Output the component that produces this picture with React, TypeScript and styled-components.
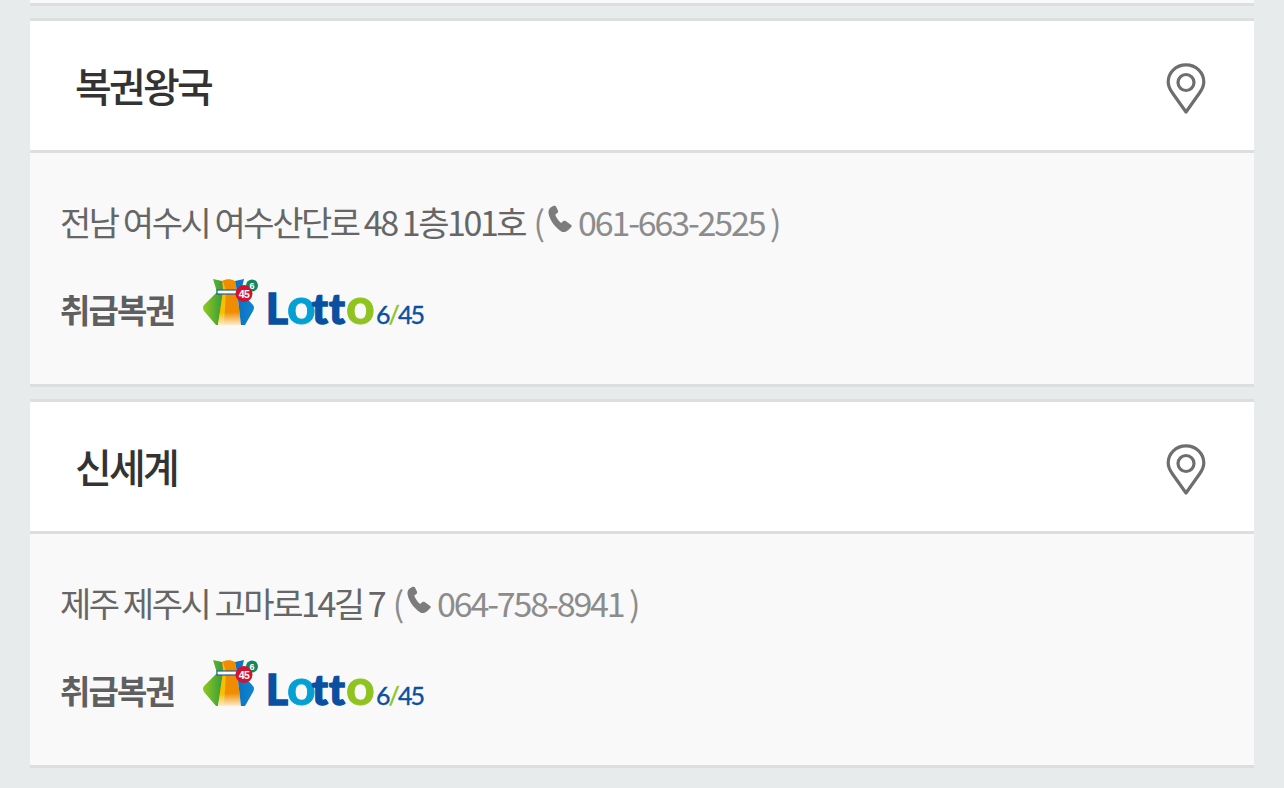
import React from "react";
import styled, { createGlobalStyle } from "styled-components";

const Global = createGlobalStyle`
  html, body { margin: 0; padding: 0; background: #e8ebec; height: 100%; overflow: hidden; }
  body { font-family: "Noto Sans CJK KR", "Noto Sans", sans-serif; }
`;

const Page = styled.div`
  padding: 0 30px;
  height: 788px;
  overflow: hidden;
`;

const Stub = styled.div`
  height: 3px;
  background: #f9f9f9;
  border-bottom: 3px solid #dcdedf;
  margin-bottom: 12px;
`;

const Card = styled.section`
  border-top: 3px solid #dcdedf;
  border-bottom: 3px solid #dcdedf;
  margin-bottom: 12px;
  background: #f9f9f9;
`;

const Head = styled.header`
  height: 129px;
  background: #fff;
  border-bottom: 3px solid #dcdedf;
  display: flex;
  align-items: center;
  justify-content: space-between;
  padding: 0 48px 0 45px;
`;

const Title = styled.h2`
  margin: 0 0 2px;
  font-size: 40px;
  font-weight: 500;
  letter-spacing: -2.8px;
  color: #333;
  line-height: 1;
`;

const PinSvg = styled.svg`
  display: block;
  margin-top: 6px;
`;

const Body = styled.div`
  height: 231px;
  box-sizing: border-box;
  padding: 46px 30px 0;
`;

const Address = styled.p`
  margin: 0;
  height: 44px;
  display: flex;
  align-items: center;
  font-size: 34px;
  font-weight: 400;
  letter-spacing: -2.45px;
  color: #666;
  white-space: pre;
`;

const Phone = styled.span`
  color: #8c8c8c;
  display: inline-flex;
  align-items: center;
  white-space: pre;
  letter-spacing: -2.15px;
  margin-left: 3px;
`;

const PhoneSvg = styled.svg`
  display: block;
  margin: 0 6px 4px 5px;
`;

const Kinds = styled.div`
  display: flex;
  align-items: center;
  margin-top: 28px;
  height: 66px;
`;

const KindsLabel = styled.strong`
  font-size: 33px;
  font-weight: 700;
  letter-spacing: -1.9px;
  color: #5f5f5f;
  width: 143px;
  margin-top: 10px;
`;

const PinIcon = () => (
  <PinSvg width="40" height="51" viewBox="0 0 40 51" fill="none" stroke="#6e6e6e" strokeWidth="3.2">
    <path d="M20 49 L6.5 30 C3.3 25.5 2.2 22.5 2.2 19 C2.2 9.5 10 1.8 20 1.8 C30 1.8 37.8 9.5 37.8 19 C37.8 22.5 36.7 25.5 33.5 30 Z" strokeLinejoin="round" />
    <circle cx="20" cy="19.5" r="8" />
  </PinSvg>
);

const PhoneIcon = () => (
  <PhoneSvg width="24" height="28" viewBox="0 0 24.5 28">
    <path
      fill="#7c7c7c"
      d="M6 0.5 C4 1 1 3 0.5 6 C0 12 6 22 14 27 C16 28 19 27 21 25 L24 22 C24.5 21 24 20 23 19.5 L18 16 C17 15.5 16 15.5 15 16.5 L13.5 18 C11 16.5 8 12 7.5 9.5 L9.5 8 C10.5 7 10.5 6 10 5 L8 1 C7.7 0.5 7 0.3 6 0.5 Z"
    />
  </PhoneSvg>
);

const LogoWord = styled.text`
  font-family: Lato, "Open Sans", sans-serif;
  font-weight: 900;
`;

const LogoRing = styled.text`
  font-family: Lato, "Open Sans", sans-serif;
  font-weight: 700;
`;

const LottoLogo = () => (
  <svg width="224" height="52" viewBox="0 0 224 52">
    <defs>
      <linearGradient id="fadeO" x1="0" y1="0" x2="0" y2="1">
        <stop offset="0.72" stopColor="#f08c00" />
        <stop offset="1" stopColor="#fdeccb" />
      </linearGradient>
      <linearGradient id="fadeY" x1="0" y1="0" x2="0" y2="1">
        <stop offset="0.72" stopColor="#f6c000" />
        <stop offset="1" stopColor="#fdeccb" />
      </linearGradient>
      <linearGradient id="fadeG" x1="0" y1="0" x2="1" y2="0">
        <stop offset="0" stopColor="#93c91f" />
        <stop offset="1" stopColor="#2f9a3c" />
      </linearGradient>
      <linearGradient id="fadeB" x1="0" y1="0" x2="1" y2="0">
        <stop offset="0" stopColor="#0a6fc0" />
        <stop offset="1" stopColor="#0f86cf" />
      </linearGradient>
    </defs>
    <path d="M10 1 L19 3 L21 13 L17 47 L13 47 L1 33 Q-1 29 1 27 L14 14 Z" fill="url(#fadeG)" />
    <path d="M19 3 C23 0.5 28 0.5 32 3 L34 13 L38 47 L15 47 L20 13 Z" fill="url(#fadeO)" />
    <path d="M20 3 L23 13 L21 47 L15 47 L20 13 Z" fill="url(#fadeY)" />
    <path d="M32 3 L41 1 L38 14 L50 27 Q52 29 50 33 L42 47 L38 47 L34 13 Z" fill="url(#fadeB)" />
    <rect x="14" y="12" width="26" height="4" fill="#fff" stroke="#1f5f9f" strokeWidth="1.2" />
    <circle cx="49" cy="7.5" r="6" fill="#11885a" />
    <circle cx="41" cy="15.5" r="8.5" fill="#d2122e" />
    <text x="41" y="19.5" textAnchor="middle" fontFamily="Liberation Sans, sans-serif" fontSize="10.5" fontWeight="700" fill="#fff" letterSpacing="-0.5">45</text>
    <text x="49" y="11" textAnchor="middle" fontFamily="Liberation Sans, sans-serif" fontSize="9" fontWeight="700" fill="#fff">6</text>
    <LogoWord x="63" y="46" fontSize="42" fill="#0a50a1" stroke="#0a50a1" strokeWidth="1.5">L</LogoWord>
    <LogoRing x="84" y="46" fontSize="50" fill="#04a0d4" stroke="#04a0d4" strokeWidth="1">o</LogoRing>
    <LogoWord x="109" y="46" fontSize="42" fill="#0a50a1" stroke="#0a50a1" strokeWidth="1.5">t</LogoWord>
    <LogoWord x="126" y="46" fontSize="42" fill="#0a50a1" stroke="#0a50a1" strokeWidth="1.5">t</LogoWord>
    <LogoRing x="143" y="46" fontSize="50" fill="#8fc31f" stroke="#8fc31f" strokeWidth="1">o</LogoRing>
    <text y="46" fontFamily="Lato, sans-serif" fontSize="25" fontWeight="400" letterSpacing="-1.9" stroke="#0a50a1" strokeWidth="0.4">
      <tspan x="173" fill="#0a50a1">6</tspan>
      <tspan fill="#8fc31f" stroke="#8fc31f">/</tspan>
      <tspan fill="#0a50a1">45</tspan>
    </text>
  </svg>
);

const shops = [
  { name: "복권왕국", addr: "전남 여수시 여수산단로 48 1층101호", tel: "061-663-2525" },
  { name: "신세계", addr: "제주 제주시 고마로14길 7", tel: "064-758-8941" },
];

export default function App() {
  return (
    <Page>
      <Global />
      <Stub />
      {shops.map((s) => (
        <Card key={s.name}>
          <Head>
            <Title>{s.name}</Title>
            <PinIcon />
          </Head>
          <Body>
            <Address>
              {s.addr}
              <Phone>
                {" ("}
                <PhoneIcon />
                {s.tel}
                {" )"}
              </Phone>
            </Address>
            <Kinds>
              <KindsLabel>취급복권</KindsLabel>
              <LottoLogo />
            </Kinds>
          </Body>
        </Card>
      ))}
    </Page>
  );
}
